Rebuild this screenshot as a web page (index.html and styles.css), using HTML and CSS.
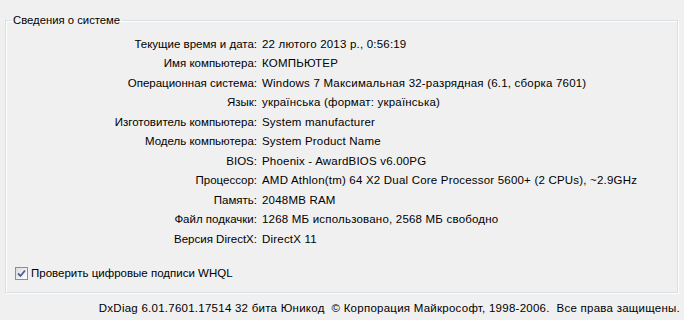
FILE: index.html
```html
<!DOCTYPE html>
<html lang="ru">

<head>
    <meta charset="UTF-8">
    <title>Сведения о системе</title>
    <link rel="stylesheet" href="styles.css">
</head>

<body>
    <fieldset class="sysinfo">
        <legend>Сведения о системе</legend>
        <div class="rows">
            <span class="lbl">Текущие время и дата:</span><span class="val">22 лютого 2013 р., 0:56:19</span>
            <span class="lbl">Имя компьютера:</span><span class="val">КОМПЬЮТЕР</span>
            <span class="lbl">Операционная система:</span><span class="val">Windows 7 Максимальная 32-разрядная (6.1, сборка 7601)</span>
            <span class="lbl">Язык:</span><span class="val">українська (формат: українська)</span>
            <span class="lbl">Изготовитель компьютера:</span><span class="val">System manufacturer</span>
            <span class="lbl">Модель компьютера:</span><span class="val">System Product Name</span>
            <span class="lbl">BIOS:</span><span class="val">Phoenix - AwardBIOS v6.00PG</span>
            <span class="lbl">Процессор:</span><span class="val">AMD Athlon(tm) 64 X2 Dual Core Processor 5600+ (2 CPUs), ~2.9GHz</span>
            <span class="lbl">Память:</span><span class="val">2048MB RAM</span>
            <span class="lbl">Файл подкачки:</span><span class="val">1268 МБ использовано, 2568 МБ свободно</span>
            <span class="lbl">Версия DirectX:</span><span class="val">DirectX 11</span>
        </div>
        <label class="check"><span class="box"><svg width="9" height="9" viewBox="0 0 9 9"><path d="M1 4.5 L3.5 7 L8 1.5" fill="none" stroke="#4a5f97" stroke-width="1.8"/></svg></span>Проверить цифровые подписи WHQL</label>
    </fieldset>
    <div class="footer">DxDiag 6.01.7601.17514 32 бита Юникод&nbsp; © Корпорация Майкрософт, 1998-2006.&nbsp; Все права защищены.</div>
</body>

</html>
```

FILE: styles.css
```css
* {
    margin: 0;
    padding: 0;
    box-sizing: border-box;
}

body {
    background: #f0f0f0;
    font-family: "Liberation Sans", Arial, sans-serif;
    font-size: 11.5px;
    color: #000;
    width: 684px;
    height: 320px;
    overflow: hidden;
    padding: 13px 0 0 5px;
}

.sysinfo {
    width: 673px;
    height: 280px;
    border: 1px solid #d5dfe5;
    box-shadow: 1px 1px 0 #fff, inset 1px 1px 0 #fff;
    padding: 0;
    position: relative;
}

.sysinfo legend {
    margin-left: 5px;
    padding: 0 2px;
    line-height: 14px;
    font-size: 11.3px;
}

.rows {
    display: grid;
    grid-template-columns: 251px 1fr;
    column-gap: 5px;
    grid-auto-rows: 19.5px;
    align-items: center;
    margin-top: 7px;
}

.lbl {
    text-align: right;
}

.val {
    letter-spacing: 0.2px;
}

.check {
    display: flex;
    align-items: center;
    gap: 3px;
    margin: 18px 0 0 9px;
}

.box {
    width: 13px;
    height: 13px;
    border: 1px solid #8f8f8f;
    background: linear-gradient(135deg, #dcdcdc, #fff);
    display: flex;
    align-items: center;
    justify-content: center;
}

.footer {
    text-align: right;
    padding-right: 4px;
    margin-top: 9px;
    letter-spacing: 0.25px;
}
```
